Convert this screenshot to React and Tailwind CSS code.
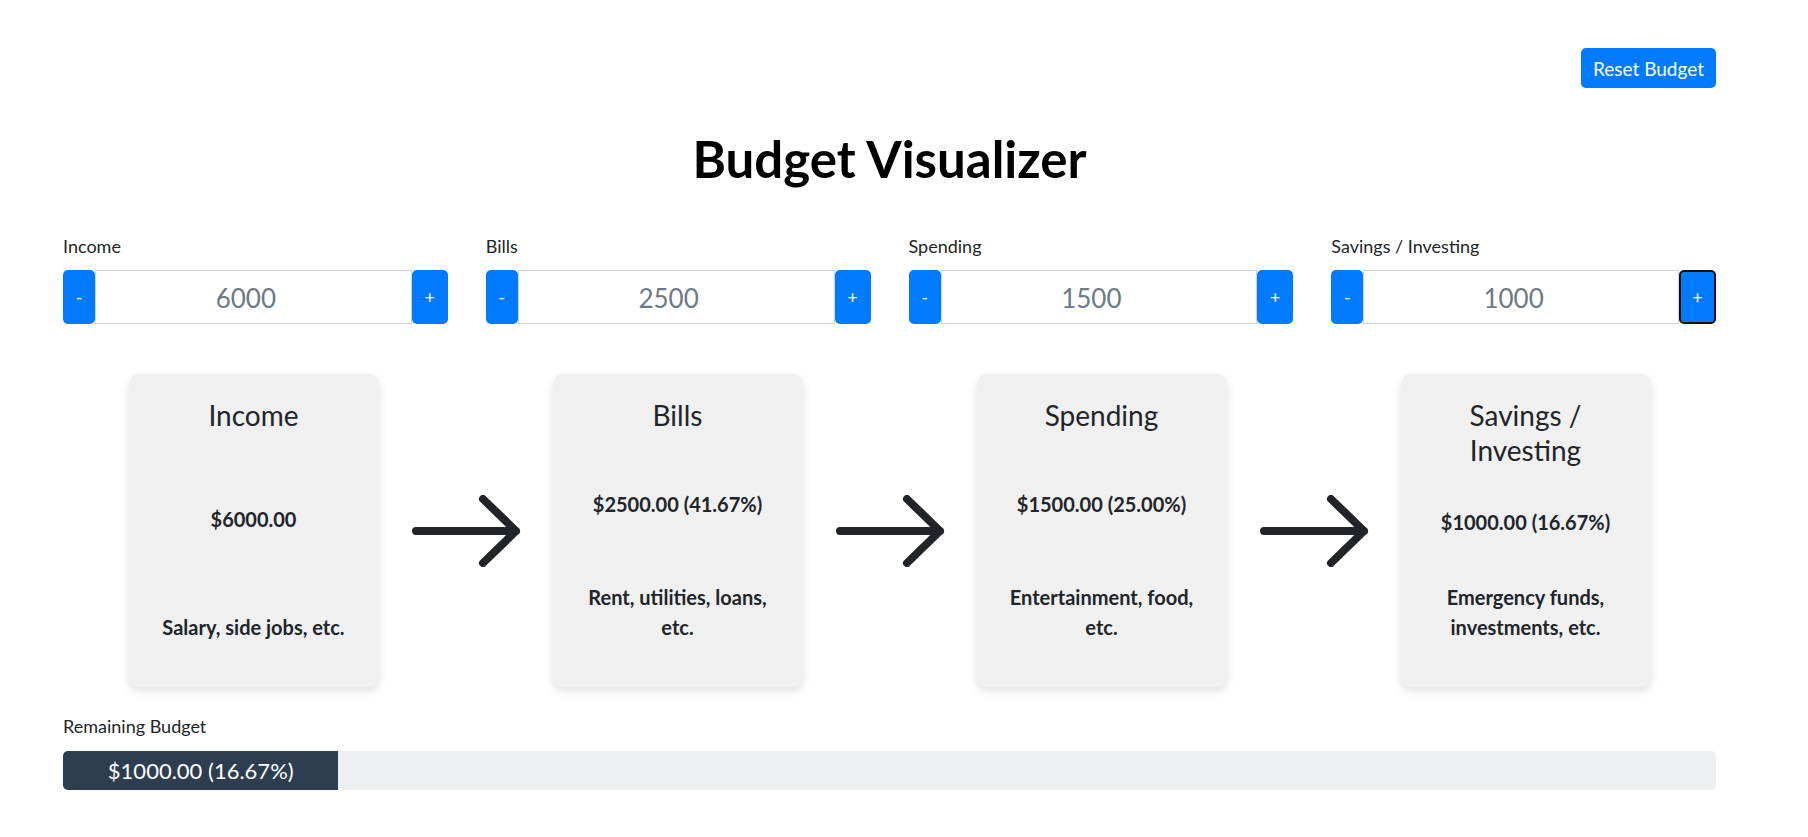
import { useState } from 'react';

const categories = [
  { key: 'income', label: 'Income', title: 'Income', desc: 'Salary, side jobs, etc.' },
  { key: 'bills', label: 'Bills', title: 'Bills', desc: 'Rent, utilities, loans, etc.' },
  { key: 'spending', label: 'Spending', title: 'Spending', desc: 'Entertainment, food, etc.' },
  { key: 'savings', label: 'Savings / Investing', title: 'Savings / Investing', desc: 'Emergency funds, investments, etc.' },
];

const defaults = { income: 6000, bills: 2500, spending: 1500, savings: 1000 };

function Arrow() {
  return (
    <svg width="110" height="72" viewBox="0 0 110 72" fill="none" className="shrink-0">
      <path d="M5 36 H105 M72 4 L105 36 L72 68" stroke="#212529" strokeWidth="8" strokeLinecap="round" strokeLinejoin="round" />
    </svg>
  );
}

function App() {
  const [values, setValues] = useState(defaults);
  const [focused, setFocused] = useState('savings');

  const change = (key, delta) => {
    setFocused(key);
    setValues((v) => ({ ...v, [key]: Math.max(0, v[key] + delta) }));
  };

  const income = values.income;
  const pct = (n) => (income > 0 ? ((n / income) * 100).toFixed(2) : '0.00');
  const remaining = income - values.bills - values.spending - values.savings;
  const remainingPct = income > 0 ? Math.max(0, Math.min(100, (remaining / income) * 100)) : 0;

  return (
    <div className="min-h-screen bg-white pt-[48px] pl-[63px] pr-[92px] pb-[40px] font-['Lato','Liberation_Sans',sans-serif] text-[#212529]">
      <div className="flex justify-end">
        <button
          onClick={() => setValues(defaults)}
          className="h-[40px] px-[12px] rounded-[5px] bg-[#007bff] text-white text-[19px] leading-[27px] hover:bg-[#0069d9]"
        >
          Reset Budget
        </button>
      </div>

      <h1 className="mt-[40px] text-center text-[51px] leading-[1.2] font-bold text-black">Budget Visualizer</h1>

      <div className="mt-[44px] grid grid-cols-4 gap-[38px]">
        {categories.map((c) => (
          <div key={c.key}>
            <label className="block text-[18px] leading-[27px]">{c.label}</label>
            <div className="mt-[10px] flex h-[54px]">
              <button
                onClick={() => change(c.key, -100)}
                className="w-[32px] shrink-0 rounded-[5px] bg-[#007bff] text-white text-[18px]"
              >
                -
              </button>
              <input
                type="number"
                value={values[c.key]}
                onChange={(e) => setValues((v) => ({ ...v, [c.key]: Number(e.target.value) || 0 }))}
                className="min-w-0 flex-1 border border-[#ced4da] bg-white pt-[3px] text-center text-[26px] text-[#6c7a86] outline-none"
              />
              <button
                onClick={() => change(c.key, 100)}
                className={
                  focused === c.key
                    ? 'w-[37px] shrink-0 rounded-[5px] border-2 border-[#111] bg-[#007bff] text-white text-[18px]'
                    : 'w-[36px] shrink-0 rounded-[5px] bg-[#007bff] text-white text-[18px]'
                }
              >
                +
              </button>
            </div>
          </div>
        ))}
      </div>

      <div className="mt-[50px] flex items-center justify-center gap-[32px]">
        {categories.map((c, i) => (
          <div key={c.key} className="contents">
            {i > 0 && <Arrow />}
            <div className="flex h-[313px] w-[250px] shrink-0 flex-col justify-between rounded-[10px] bg-[#f0f0f0] px-[22px] pt-[24px] pb-[45px] text-center shadow-[0_4px_8px_rgba(0,0,0,0.12)]">
              <h3 className="text-[28px] leading-[35px]">{c.title}</h3>
              <p className="mb-[7px] text-[20px] leading-[30px] font-bold">
                ${values[c.key].toFixed(2)}
                {c.key !== 'income' && ` (${pct(values[c.key])}%)`}
              </p>
              <p className="text-[20px] leading-[30px] font-bold">{c.desc}</p>
            </div>
          </div>
        ))}
      </div>

      <div className="mt-[26px] text-[18px] leading-[27px]">Remaining Budget</div>
      <div className="mt-[11px] flex h-[39px] overflow-hidden rounded-[5px] bg-[#ecf0f1]">
        <div
          className="flex items-center justify-center bg-[#2c3e50] text-[22px] text-white whitespace-nowrap"
          style={{ width: `${remainingPct}%` }}
        >
          ${remaining.toFixed(2)} ({remainingPct.toFixed(2)}%)
        </div>
      </div>
    </div>
  );
}

export default App;
